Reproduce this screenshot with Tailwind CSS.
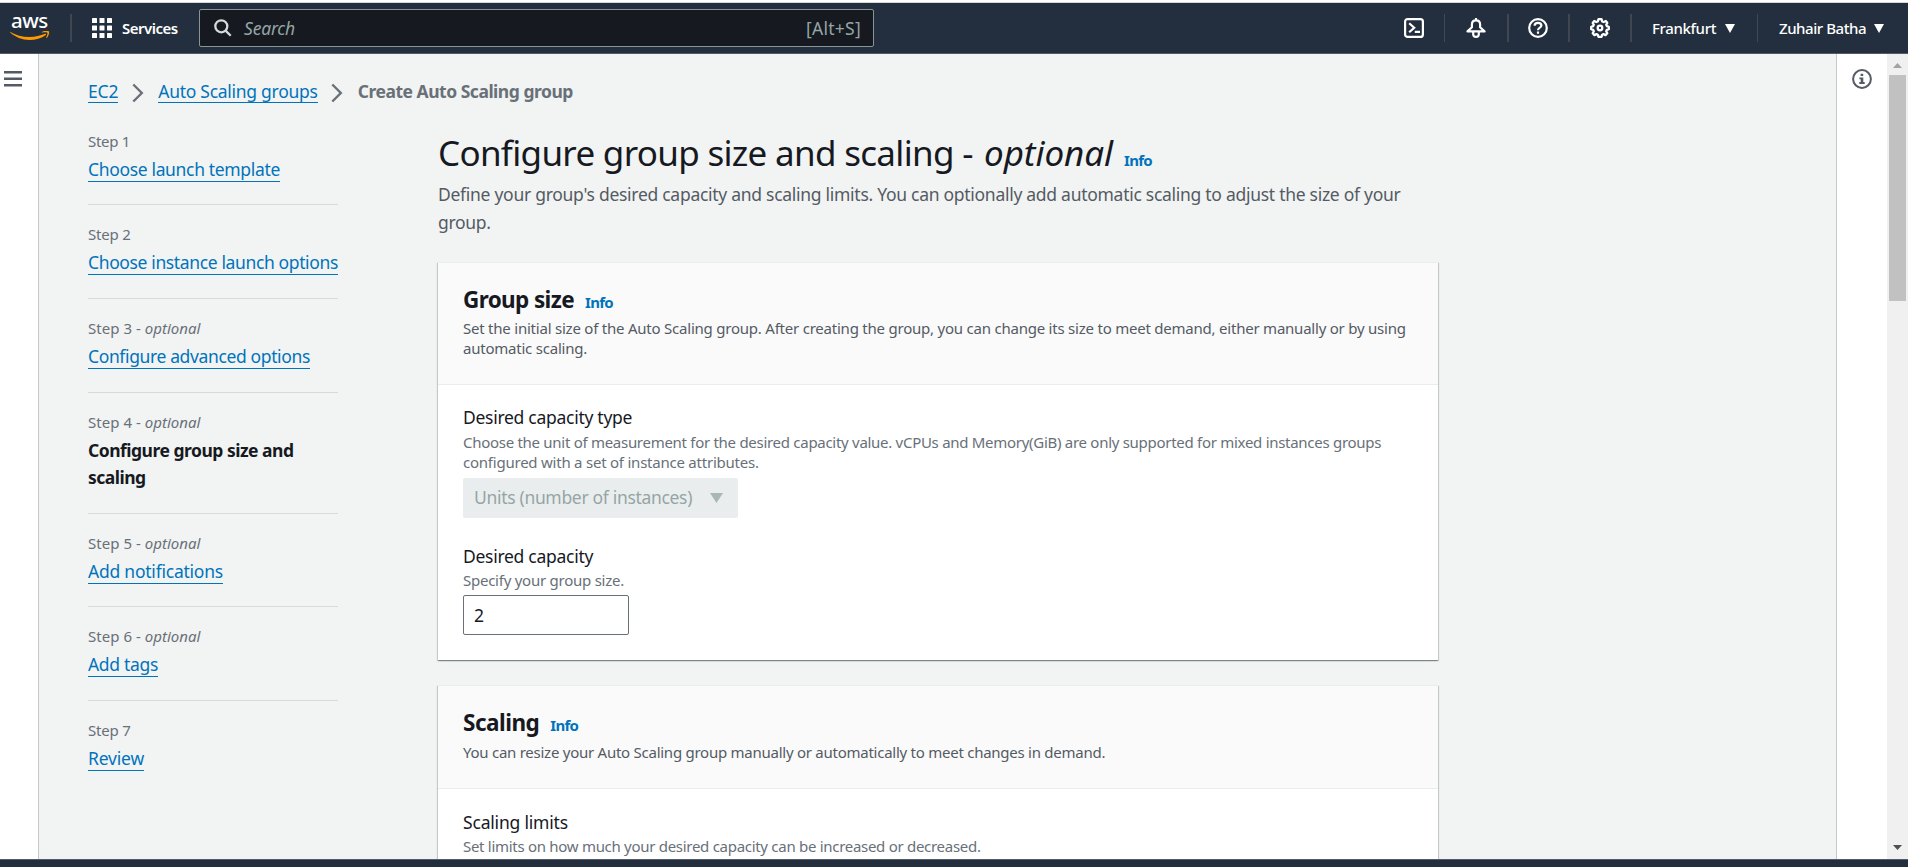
<!DOCTYPE html>
<html lang="en">
<head>
<meta charset="utf-8">
<title>Create Auto Scaling group</title>
<script src="https://cdn.jsdelivr.net/npm/@tailwindcss/browser@4"></script>
</head>
<body class="flex h-screen flex-col overflow-hidden bg-[#f2f3f3] font-['Noto_Sans',sans-serif] text-[17.5px] text-[#16191f]">
<div class="h-[3px] shrink-0 border-b border-[#d5d7db] bg-white"></div>

<header class="flex h-[51px] shrink-0 items-start border-b border-[#545b64] bg-[#232f3e] text-white">
  <div class="mt-[8px] ml-[10px] flex w-[40px] flex-col">
    <span class="h-[20px] pl-px text-[20.5px] leading-[18px] font-medium tracking-[-0.5px]">aws</span>
    <svg class="h-[10px] w-[40px]" viewBox="0 0 40 10" fill="#ff9900"><path d="M.4 .9C5.600 4 12 6 19.500 6C25 6 30.500 4.800 35 2.800C35.900 2.400 36.500 3.300 35.800 3.900C31.500 7.200 25.500 9 19.500 9C12 9 5.300 6.200 .2 1.600C-.2 1.200 0 .7 .4 .9Z"/><path d="M37.300 1.800C36.700 1 33.500 1.400 32 1.600C31.600 1.600 31.500 1.200 31.900 1C34.400-.6 38.500-.3 39 .4C39.500 1 38.900 5 36.600 7C36.200 7.300 35.900 7.100 36.100 6.700C36.600 5.500 37.900 2.600 37.300 1.800Z"/></svg>
  </div>
  <div class="mt-[11px] ml-[20px] h-[28px] w-[2px] bg-[#414750]"></div>
  <svg class="mt-[15px] ml-[20px] size-[20px]" viewBox="0 0 20 20" fill="#fff"><rect width="5" height="5" rx=".6"/><rect x="7.500" width="5" height="5" rx=".6"/><rect x="15" width="5" height="5" rx=".6"/><rect y="7.500" width="5" height="5" rx=".6"/><rect x="7.500" y="7.500" width="5" height="5" rx=".6"/><rect x="15" y="7.500" width="5" height="5" rx=".6"/><rect y="15" width="5" height="5" rx=".6"/><rect x="7.500" y="15" width="5" height="5" rx=".6"/><rect x="15" y="15" width="5" height="5" rx=".6"/></svg>
  <span class="mt-[15px] ml-[10px] w-[77px] text-[15px] leading-[20px] font-semibold tracking-[-0.52px]">Services</span>
  <div class="mt-[6px] flex h-[38px] w-[675px] items-center rounded-[2px] border border-[#879596] bg-[#16191f] pr-[12px] pl-[14px] text-[#95a5a6]">
    <svg class="size-[18px]" viewBox="0 0 18 18" fill="none" stroke="#d5dbdb" stroke-width="2.300"><circle cx="7.300" cy="7.300" r="6"/><path d="M11.600 11.600L16.700 16.700"/></svg>
    <span class="ml-[12px] flex-1 pb-px leading-[24px] italic tracking-[-0.2px]">Search</span>
    <span class="pb-px leading-[24px] tracking-[0.26px]">[Alt+S]</span>
  </div>
  <svg class="mt-[15px] ml-[530px] size-[20px]" viewBox="0 0 20 20" fill="none" stroke="#fff" stroke-width="2.200"><rect x="1.100" y="1.100" width="17.800" height="17.800" rx="2.500"/><path d="M5.200 5.200L10.200 9.700L5.200 14.200M10.800 13.900H16"/></svg>
  <div class="mt-[11px] ml-[20px] h-[28px] w-px bg-[#414750]"></div>
  <svg class="mt-[15px] ml-[21px] size-[20px]" viewBox="0 0 20 20" fill="none" stroke="#fff" stroke-width="2.200" stroke-linejoin="round"><path d="M10 0V2.500M1.500 13.400L5.900 9.200V6.500C5.900 4 7.600 2.400 10 2.400S14.100 4 14.100 6.500V9.200L18.500 13.400Z"/><path d="M7.200 14V16.200C7.200 17.700 8.400 18.800 10 18.800S12.800 17.700 12.800 16.200V14"/></svg>
  <div class="mt-[11px] ml-[21px] h-[28px] w-[2px] bg-[#414750]"></div>
  <svg class="mt-[15px] ml-[19px] size-[20px]" viewBox="0 0 20 20" fill="none" stroke="#fff" stroke-width="2.200"><circle cx="10" cy="10" r="8.800"/><path d="M6.600 7.800C6.600 5.900 8 4.900 10 4.900S13.400 6 13.400 7.600C13.400 9.800 10 9.500 10 12.300M10 13.500V15.800"/></svg>
  <div class="mt-[11px] ml-[20px] h-[28px] w-[2px] bg-[#414750]"></div>
  <svg class="mt-[15px] ml-[20px] size-[20px]" viewBox="0 0 20 20" fill="none" stroke="#fff" stroke-width="2.300" stroke-linejoin="round"><path d="M8.500 1.200H11.500L12.200 3.400L13.700 4L15.800 2.900L17.300 5L16.200 6.800L16.800 8.100L18.800 8.800V11.200L16.800 11.900L16.200 13.200L17.300 15.200L15.500 17.100L13.500 16.100L12.200 16.700L11.500 18.800H8.500L7.800 16.700L6.500 16.100L4.500 17.100L2.700 15.200L3.800 13.200L3.200 11.900L1.200 11.200V8.800L3.200 8.100L3.800 6.800L2.700 5L4.300 2.900L6.300 4L7.800 3.400Z"/><circle cx="10" cy="10" r="2.300"/></svg>
  <div class="mt-[11px] ml-[20px] h-[28px] w-[2px] bg-[#414750]"></div>
  <span class="mt-[15px] ml-[20px] w-[73px] text-[15px] leading-[20px] font-medium tracking-[-0.35px]">Frankfurt</span>
  <svg class="mt-[21px] h-[9px] w-[10px]" viewBox="0 0 10 9" fill="#fff"><path d="M0 0H10L5 9Z"/></svg>
  <div class="mt-[11px] ml-[22px] h-[28px] w-px bg-[#414750]"></div>
  <span class="mt-[15px] ml-[21px] w-[95px] text-[15px] leading-[20px] font-medium tracking-[-0.45px] whitespace-nowrap">Zuhair Batha</span>
  <svg class="mt-[21px] h-[9px] w-[10px]" viewBox="0 0 10 9" fill="#fff"><path d="M0 0H10L5 9Z"/></svg>
</header>

<div class="flex min-h-0 flex-1">
  <aside class="w-[39px] shrink-0 border-r border-[#c3c9cb] bg-white pt-[17px] pl-[4px]">
    <svg class="h-[16px] w-[18px]" viewBox="0 0 18 16" fill="#545b64"><rect width="18" height="2.500" y="0"/><rect width="18" height="2.500" y="6.500"/><rect width="18" height="2.500" y="13"/></svg>
  </aside>

  <div class="min-w-0 flex-1 overflow-hidden pl-[49px]">
    <nav class="mt-[23px] flex h-[28px] items-start leading-[28px] whitespace-nowrap">
      <a class="h-[26px] border-b border-[#0073bb] tracking-[-0.17px] text-[#0073bb]">EC2</a>
      <svg class="mt-[6px] ml-[14px] h-[20px] w-[12px]" viewBox="0 0 12 20" fill="none" stroke="#687078" stroke-width="2.400"><path d="M1.300 1.500L9.800 10L1.300 18.500"/></svg>
      <a class="ml-[14px] h-[26px] w-[159.500px] border-b border-[#0073bb] tracking-[-0.28px] text-[#0073bb]">Auto Scaling groups</a>
      <svg class="mt-[6px] ml-[13px] h-[20px] w-[12px]" viewBox="0 0 12 20" fill="none" stroke="#687078" stroke-width="2.400"><path d="M1.300 1.500L9.800 10L1.300 18.500"/></svg>
      <span class="ml-[15px] font-bold tracking-[-0.49px] text-[#687078]">Create Auto Scaling group</span>
    </nav>

    <div class="flex items-start">
      <ol class="mt-[25.750px] w-[250px] shrink-0 leading-[27.500px] whitespace-nowrap [&_a]:inline-block [&_a]:h-[26px] [&_a]:border-b [&_a]:border-[#0073bb] [&_a]:text-[#0073bb] [&_a]:align-top [&_div]:mt-[5px] [&_li]:border-b [&_li]:border-[#d5dbdb] [&_li]:pt-[19px] [&_li]:pb-[21.100px] [&_p]:text-[15px] [&_p]:leading-[20px] [&_p]:text-[#687078] [&_p]:tracking-[0.03px]">
        <li class="!pt-0"><p class="!tracking-[-0.3px]">Step 1</p><div class="h-[27.500px]"><a class="tracking-[-0.34px]">Choose launch template</a></div></li>
        <li><p class="!tracking-[-0.2px]">Step 2</p><div class="h-[27.500px]"><a class="tracking-[-0.37px]">Choose instance launch options</a></div></li>
        <li><p>Step 3 - <i>optional</i></p><div class="h-[27.500px]"><a class="tracking-[-0.37px]">Configure advanced options</a></div></li>
        <li><p>Step 4 - <i>optional</i></p><div class="font-bold tracking-[-0.5px]">Configure group size and<br>scaling</div></li>
        <li><p>Step 5 - <i>optional</i></p><div class="h-[27.500px]"><a class="tracking-[-0.23px]">Add notifications</a></div></li>
        <li><p>Step 6 - <i>optional</i></p><div class="h-[27.500px]"><a class="tracking-[-0.32px]">Add tags</a></div></li>
        <li class="!border-0"><p class="!tracking-[-0.2px]">Step 7</p><div class="h-[27.500px]"><a class="tracking-[-0.18px]">Review</a></div></li>
      </ol>

      <main class="ml-[100px] w-[1000px] shrink-0 whitespace-nowrap">
        <h1 class="mt-[25px] flex h-[45px] items-baseline text-[35px] leading-[45px]"><span class="w-[546px] tracking-[-0.69px]">Configure group size and scaling -</span><i class="tracking-[-0.06px]">optional</i><a class="ml-[11px] text-[15px] font-bold tracking-[-0.69px] text-[#0073bb]">Info</a></h1>
        <p class="mt-[6px] leading-[27.500px] text-[#545b64]"><span class="tracking-[-0.28px]">Define your group's desired capacity and scaling limits. You can optionally add automatic scaling to adjust the size of your</span><br><span class="tracking-[-0.3px]">group.</span></p>

        <section class="mt-[26px] h-[398px] border-t border-[#eaeded] bg-white shadow-[0_1px_1px_0_rgba(0,28,36,.3),1px_1px_1px_0_rgba(0,28,36,.15),-1px_1px_1px_0_rgba(0,28,36,.15)]">
          <div class="h-[122px] border-b border-[#eaeded] bg-[#fafafa] px-[25px] pt-[23px]">
            <h2 class="flex h-[28px] items-baseline text-[22.500px] leading-[28px] font-bold tracking-[-0.62px]">Group size<a class="ml-[11px] text-[15px] font-bold tracking-[-0.69px] text-[#0073bb]">Info</a></h2>
            <p class="mt-[4px] text-[15px] leading-[20px] tracking-[-0.223px] text-[#545b64]">Set the initial size of the Auto Scaling group. After creating the group, you can change its size to meet demand, either manually or by using<br>automatic scaling.</p>
          </div>
          <div class="px-[25px] pt-[18px]">
            <div class="leading-[28px] tracking-[-0.28px]">Desired capacity type</div>
            <p class="mt-[1px] text-[15px] leading-[20px] tracking-[-0.285px] text-[#687078]">Choose the unit of measurement for the desired capacity value. vCPUs and Memory(GiB) are only supported for mixed instances groups<br><span class="tracking-[-0.23px]">configured with a set of instance attributes.</span></p>
            <div class="mt-[6px] flex h-[40px] w-[275px] items-center rounded-[2px] bg-[#eaeded] pr-[15px] pl-[11px] text-[#95a5a6]">
              <span class="flex-1 pb-[2px] leading-[28px] tracking-[-0.32px]">Units (number of instances)</span>
              <svg class="h-[10px] w-[13px]" viewBox="0 0 13 10" fill="#aab7b8"><path d="M0 0H13L6.500 10Z"/></svg>
            </div>
            <div class="mt-[24px] leading-[28px] tracking-[-0.28px]">Desired capacity</div>
            <p class="text-[15px] leading-[20px] tracking-[-0.25px] text-[#687078]">Specify your group size.</p>
            <div class="mt-[5px] flex h-[40px] w-[166px] items-center rounded-[2px] border border-[#687078] bg-white pb-px pl-[10px] leading-[28px]">2</div>
          </div>
        </section>

        <section class="mt-[25px] h-[300px] border-t border-[#eaeded] bg-white shadow-[0_1px_1px_0_rgba(0,28,36,.3),1px_1px_1px_0_rgba(0,28,36,.15),-1px_1px_1px_0_rgba(0,28,36,.15)]">
          <div class="h-[103px] border-b border-[#eaeded] bg-[#fafafa] px-[25px] pt-[23px]">
            <h2 class="flex h-[28px] items-baseline text-[22.500px] leading-[28px] font-bold tracking-[-0.5px]">Scaling<a class="ml-[11px] text-[15px] font-bold tracking-[-0.69px] text-[#0073bb]">Info</a></h2>
            <p class="mt-[5px] text-[15px] leading-[20px] tracking-[-0.255px] text-[#545b64]">You can resize your Auto Scaling group manually or automatically to meet changes in demand.</p>
          </div>
          <div class="px-[25px] pt-[19px]">
            <div class="leading-[28px] tracking-[-0.19px]">Scaling limits</div>
            <p class="text-[15px] leading-[20px] tracking-[-0.29px] text-[#687078]">Set limits on how much your desired capacity can be increased or decreased.</p>
          </div>
        </section>
      </main>
    </div>
  </div>

  <aside class="flex w-[51px] shrink-0 justify-center border-l border-[#c3c9cb] bg-white pt-[15px]">
    <svg class="size-[20px]" viewBox="0 0 20 20" fill="#545b64"><circle cx="10" cy="10" r="8.900" fill="none" stroke="#545b64" stroke-width="2"/><path d="M8.600 4.800H11.200V7.100H8.600ZM7.400 8.500H11.300V13H12.700V15H7.300V13H8.700V10.300H7.400Z"/></svg>
  </aside>
  <div class="flex w-[21px] shrink-0 flex-col items-center bg-[#f0f0f0]">
    <svg class="mt-[9px] h-[5px] w-[9px] shrink-0" viewBox="0 0 9 5" fill="#a3a3a3"><path d="M0 5L4.500 0L9 5Z"/></svg>
    <div class="mt-[7px] h-[226px] w-[17px] shrink-0 bg-[#c1c1c1]"></div>
    <svg class="mt-auto mb-[9px] h-[5px] w-[9px] shrink-0" viewBox="0 0 9 5" fill="#505050"><path d="M0 0H9L4.500 5Z"/></svg>
  </div>
</div>
<footer class="h-[8px] shrink-0 border-t border-[#545b64] bg-[#232f3e]"></footer>
</body>
</html>
